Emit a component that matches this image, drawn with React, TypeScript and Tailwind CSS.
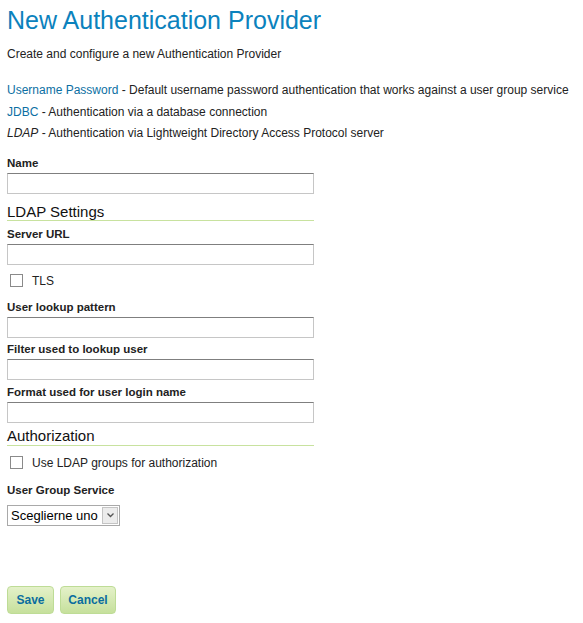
import React from 'react';

const font = { fontFamily: '"Liberation Sans", Arial, sans-serif' };

const Field = ({ label, className = 'mt-[5px]' }: { label: string; className?: string }) => (
  <div className={className}>
    <div className="text-[11.5px] leading-[14px] font-bold text-[#222]">{label}</div>
    <input
      type="text"
      className="mt-[3px] block w-[307px] h-[21px] border border-[#c6c6c6] border-t-[#7f7f7f] bg-white outline-none"
    />
  </div>
);

const Heading = ({ children, className }: { children: React.ReactNode; className: string }) => (
  <div className={`${className} w-[307px] border-b border-[#c8e29f] text-[15px] leading-[15px] text-[#111]`}>
    {children}
  </div>
);

const Check = ({ label, className }: { label: string; className: string }) => (
  <label className={`${className} flex items-center gap-[9px] pl-[3px] text-[12px] leading-[14px] text-[#222]`}>
    <span className="block w-[13px] h-[13px] border border-[#8a8a8a] bg-white" />
    {label}
  </label>
);

export default function App() {
  return (
    <div style={font} className="min-h-screen bg-white pl-[7px] pt-[5px] text-[#222]">
      <h1 className="text-[25px] leading-[30px] text-[#0b82bd]">New Authentication Provider</h1>
      <p className="mt-[12px] text-[12px] leading-[14px]">Create and configure a new Authentication Provider</p>

      <div className="mt-[19px] text-[12px] leading-[21.5px]">
        <div>
          <span className="text-[#0c6fa3]">Username Password</span> - Default username password authentication that works against a user group service
        </div>
        <div>
          <span className="text-[#0c6fa3]">JDBC</span> - Authentication via a database connection
        </div>
        <div>
          <i>LDAP</i> - Authentication via Lightweight Directory Access Protocol server
        </div>
      </div>

      <Field label="Name" className="mt-[11px]" />

      <Heading className="mt-[10px] pb-[1px]">LDAP Settings</Heading>
      <Field label="Server URL" className="mt-[6px]" />
      <Check label="TLS" className="mt-[9px]" />
      <Field label="User lookup pattern" className="mt-[12px]" />
      <Field label="Filter used to lookup user" className="mt-[4.5px]" />
      <Field label="Format used for user login name" className="mt-[4.5px]" />

      <Heading className="mt-[5px] pb-[2px]">Authorization</Heading>
      <Check label="Use LDAP groups for authorization" className="mt-[10px]" />

      <div className="mt-[13px] text-[11.5px] leading-[14px] font-bold">User Group Service</div>
      <div className="mt-[8px] flex w-[113px] h-[21px] border border-[#a9a9a9] bg-white">
        <span className="flex-1 pl-[3px] text-[13px] leading-[19px] text-black">Sceglierne uno</span>
        <span className="w-[16px] h-[17px] m-[1px] flex items-center justify-center border border-[#c4c4c4] bg-[#ececec]">
          <svg width="7" height="5" viewBox="0 0 7 5">
            <path d="M0.5 0.5 L3.5 3.5 L6.5 0.5" stroke="#555" strokeWidth="1.3" fill="none" />
          </svg>
        </span>
      </div>

      <div className="mt-[60px] flex gap-[6px]">
        <button className="w-[47px] h-[28px] rounded-[4px] border border-[#bedc96] bg-gradient-to-b from-[#e4f1c9] to-[#c6e09c] text-[12px] font-bold text-[#0b6d9f]">
          Save
        </button>
        <button className="w-[56px] h-[28px] rounded-[4px] border border-[#bedc96] bg-gradient-to-b from-[#e4f1c9] to-[#c6e09c] text-[12px] font-bold text-[#0b6d9f]">
          Cancel
        </button>
      </div>
    </div>
  );
}
